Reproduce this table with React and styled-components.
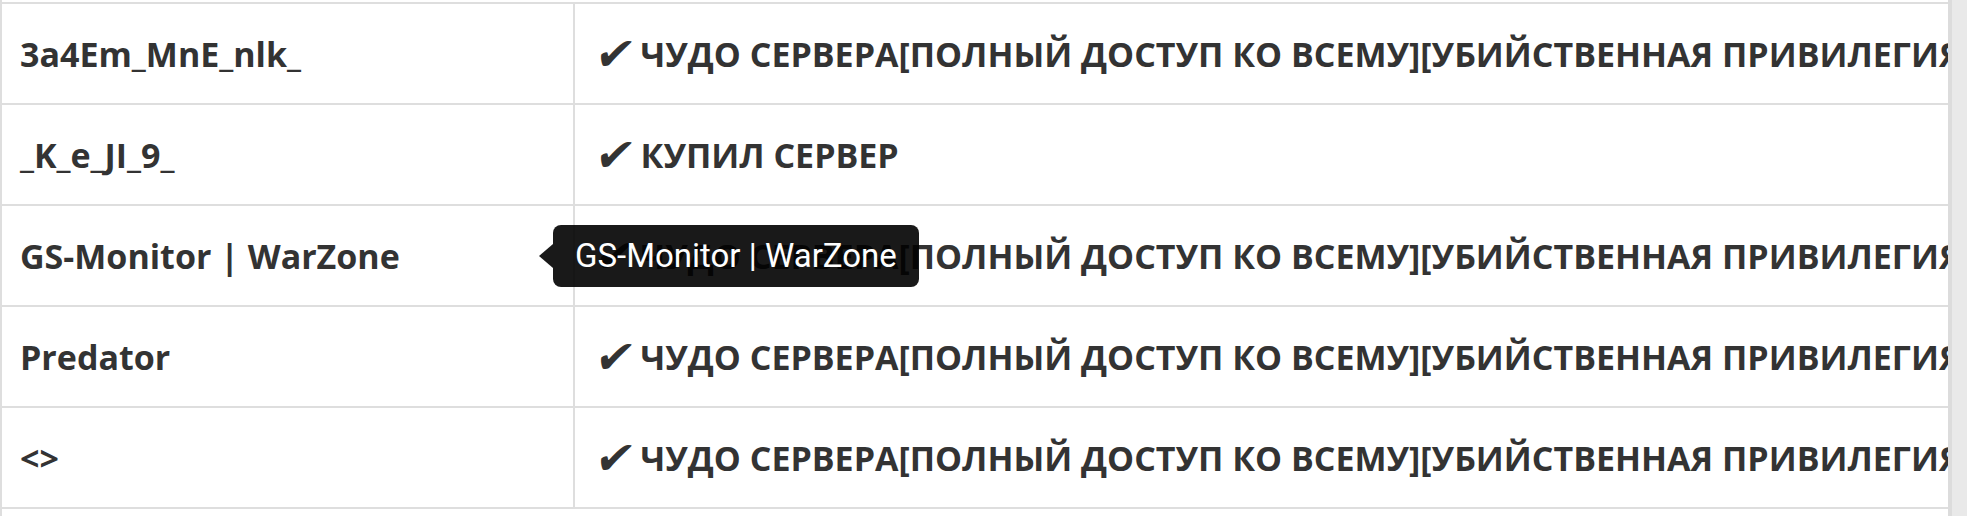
import React from 'react';
import styled, { createGlobalStyle } from 'styled-components';

const GlobalStyle = createGlobalStyle`
	html, body {
		margin: 0;
		padding: 0;
		background: #fff;
	}
`;

const Page = styled.div`
	display: flex;
	height: 516px;
	overflow: hidden;
`;

const Table = styled.div`
	width: 1948px;
	flex: none;
	box-sizing: border-box;
	padding-top: 2px;
	border-left: 2px solid #dedede;
	overflow: hidden;
`;

const Row = styled.div`
	display: grid;
	grid-template-columns: 573px 1fr;
	height: 101px;
	box-sizing: border-box;
	border-top: 2px solid #dedede;

	&:last-child {
		height: 103px;
		border-bottom: 2px solid #dedede;
	}
`;

const Cell = styled.div`
	position: relative;
	display: flex;
	align-items: center;
	box-sizing: border-box;
	padding-left: ${(p) => p.$pad}px;
	white-space: nowrap;
	font-family: 'Open Sans', 'DejaVu Sans', sans-serif;
	font-weight: 700;
	font-size: 34px;
	color: #333;
`;

const NameCell = styled(Cell)`
	border-right: 2px solid #dedede;
`;

const Check = styled.span`
	display: inline-block;
	font-family: 'DejaVu Sans', sans-serif;
	font-weight: 700;
	font-size: 46px;
	line-height: 1;
	margin-right: 6px;
	transform: skewX(-10deg);
`;

const Tooltip = styled.div`
	position: absolute;
	left: 551px;
	top: 50%;
	transform: translateY(-50%);
	z-index: 2;
	height: 62px;
	box-sizing: border-box;
	display: flex;
	align-items: center;
	padding: 0 22px;
	border-radius: 8px;
	background: rgba(0, 0, 0, 0.9);
	color: #fff;
	font-family: Roboto, 'Liberation Sans', sans-serif;
	font-weight: 400;
	font-size: 33px;
	white-space: nowrap;

	&::before {
		content: '';
		position: absolute;
		left: -14px;
		top: 50%;
		margin-top: -12px;
		border-style: solid;
		border-width: 12px 14px 12px 0;
		border-color: transparent rgba(0, 0, 0, 0.9) transparent transparent;
	}
`;

const Scrollbar = styled.div`
	flex: 1;
	background: #e9e9e9;
	border-left: 4px solid #dcdcdc;
`;

const LONG = 'ЧУДО СЕРВЕРА[ПОЛНЫЙ ДОСТУП КО ВСЕМУ][УБИЙСТВЕННАЯ ПРИВИЛЕГИЯ]';

const rows = [
	{ name: '3a4Em_MnE_nlk_', group: LONG },
	{ name: '_K_e_JI_9_', group: 'КУПИЛ СЕРВЕР' },
	{ name: 'GS-Monitor | WarZone', group: LONG, tip: true },
	{ name: 'Predator', group: LONG },
	{ name: '<>', group: LONG },
];

export default function App() {
	return (
		<>
			<GlobalStyle />
			<Page>
				<Table>
					{rows.map((r, i) => (
						<Row key={i}>
							<NameCell $pad={18}>
								{r.name}
								{r.tip && <Tooltip>{r.name}</Tooltip>}
							</NameCell>
							<Cell $pad={21}>
								<Check>✔</Check>
								{r.group}
							</Cell>
						</Row>
					))}
				</Table>
				<Scrollbar />
			</Page>
		</>
	);
}
